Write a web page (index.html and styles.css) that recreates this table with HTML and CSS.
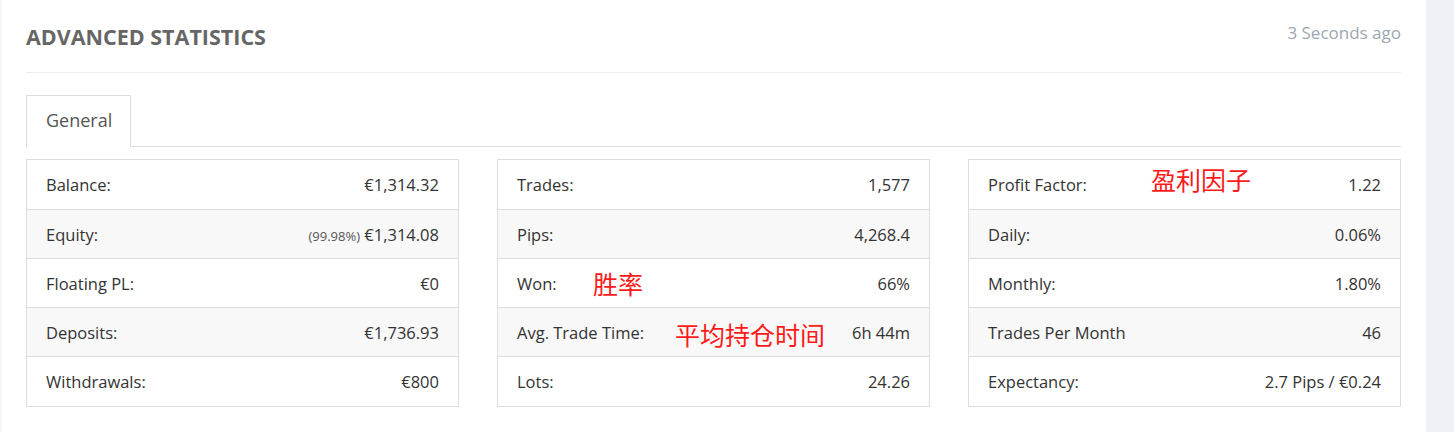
FILE: index.html
```html
<!DOCTYPE html>
<html lang="en">
<head>
<meta charset="utf-8">
<title>Advanced Statistics</title>
<link rel="stylesheet" href="styles.css">
</head>
<body>
<div class="page">
  <main class="card">
    <header class="card-head">
      <h2 class="title">ADVANCED STATISTICS</h2>
      <span class="updated">3 Seconds ago</span>
    </header>
    <nav class="tabs">
      <span class="tab active">General</span>
    </nav>
    <section class="grid">
      <div class="stat-table">
        <div class="row"><span class="label">Balance:</span><span class="value">€1,314.32</span></div>
        <div class="row"><span class="label">Equity:</span><span class="value"><small class="pct">(99.98%)</small> €1,314.08</span></div>
        <div class="row"><span class="label">Floating PL:</span><span class="value">€0</span></div>
        <div class="row"><span class="label">Deposits:</span><span class="value">€1,736.93</span></div>
        <div class="row"><span class="label">Withdrawals:</span><span class="value">€800</span></div>
      </div>
      <div class="stat-table">
        <div class="row"><span class="label">Trades:</span><span class="value">1,577</span></div>
        <div class="row"><span class="label">Pips:</span><span class="value">4,268.4</span></div>
        <div class="row"><span class="label">Won:</span><span class="note note-won">胜率</span><span class="value">66%</span></div>
        <div class="row"><span class="label">Avg. Trade Time:</span><span class="note note-time">平均持仓时间</span><span class="value">6h 44m</span></div>
        <div class="row"><span class="label">Lots:</span><span class="value">24.26</span></div>
      </div>
      <div class="stat-table">
        <div class="row"><span class="label">Profit Factor:</span><span class="note note-pf">盈利因子</span><span class="value">1.22</span></div>
        <div class="row"><span class="label">Daily:</span><span class="value">0.06%</span></div>
        <div class="row"><span class="label">Monthly:</span><span class="value">1.80%</span></div>
        <div class="row"><span class="label">Trades Per Month</span><span class="value">46</span></div>
        <div class="row"><span class="label">Expectancy:</span><span class="value">2.7 Pips / €0.24</span></div>
      </div>
    </section>
  </main>
  <aside class="side"></aside>
</div>
</body>
</html>
```

FILE: styles.css
```css
html, body {
  margin: 0;
  padding: 0;
}
body {
  background: #eef2f7;
  font-family: "Open Sans", "Noto Sans", sans-serif;
  color: #333;
  height: 432px;
  overflow: hidden;
}
.page {
  display: flex;
  height: 432px;
}
.card {
  flex: none;
  width: 1426px;
  background: #fff;
  border-left: 2px solid #f4f6f9;
  padding: 0 25px 0 24px;
  box-sizing: border-box;
}
.side {
  flex: 1;
}
.card-head {
  height: 73px;
  border-bottom: 1px solid #eeeeee;
  display: flex;
  justify-content: space-between;
  align-items: flex-start;
  box-sizing: border-box;
}
.title {
  margin: 22px 0 0;
  font-size: 21.5px;
  font-weight: 700;
  color: #666;
}
.updated {
  margin-top: 21px;
  font-size: 17px;
  color: #9ba6b2;
}
.tabs {
  margin-top: 22px;
  display: flex;
  border-bottom: 1px solid #dddddd;
}
.tab {
  display: block;
  width: 105px;
  height: 52px;
  box-sizing: border-box;
  border: 1px solid #dddddd;
  border-bottom: none;
  margin-bottom: -1px;
  background: #fff;
  padding: 12px 0 0 19px;
  font-size: 18px;
  color: #555;
}
.grid {
  margin-top: 12px;
  display: grid;
  grid-template-columns: repeat(3, 433px);
  column-gap: 38px;
}
.stat-table {
  border: 1px solid #dddddd;
}
.row {
  position: relative;
  display: flex;
  justify-content: space-between;
  align-items: center;
  height: 48px;
  padding: 0 19px 0 19px;
  font-size: 16.5px;
  color: #333;
}
.row:first-child,
.row:last-child {
  height: 49px;
}
.row + .row {
  border-top: 1px solid #dddddd;
}
.row:nth-child(even) {
  background: #f8f8f8;
}
.pct {
  font-size: 13px;
  color: #555;
}
.note {
  position: absolute;
  font-family: "Noto Sans CJK SC", sans-serif;
  font-size: 25px;
  color: #ff1a1a;
  line-height: 1;
}
.note-won {
  left: 95px;
  top: 12px;
}
.note-time {
  left: 177px;
  top: 14px;
}
.note-pf {
  left: 182px;
  top: 7px;
}
```
